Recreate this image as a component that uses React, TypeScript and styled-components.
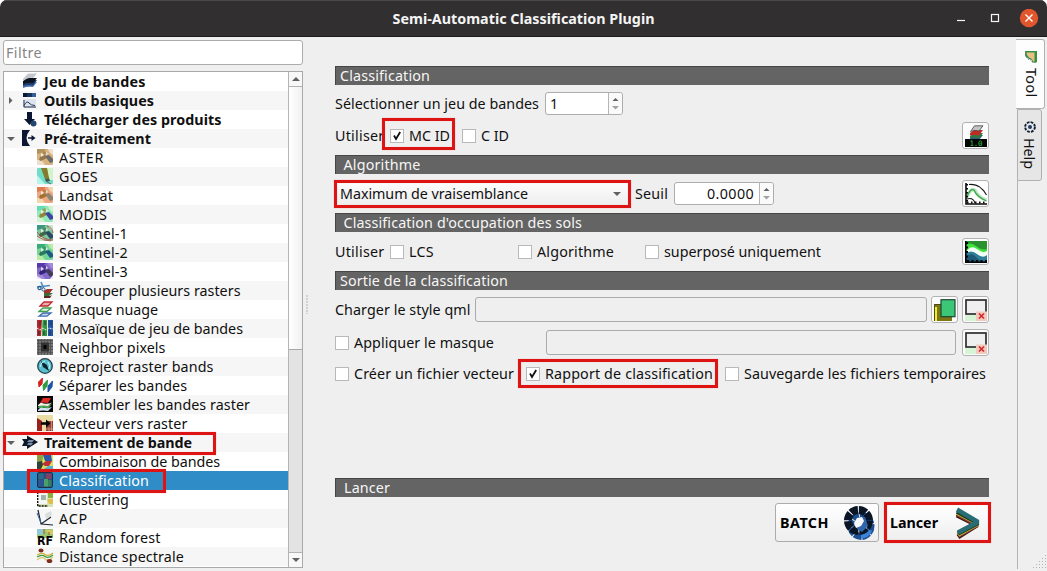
import React, { useLayoutEffect, useRef } from 'react';
import styled, { createGlobalStyle, css } from 'styled-components';

const Global = createGlobalStyle`
  * { box-sizing: border-box; }
  html, body { margin: 0; padding: 0; overflow: hidden; background: #fff; }
  body { font-family: "Noto Sans", "Open Sans", sans-serif; font-size: 14.3px; color: #111; }
`;

/* ---------- text that keeps the advance width of the desktop font ---------- */
const TextSpan = styled.span<{ $bold?: boolean; $vertical?: boolean }>`
  display: block;
  flex: none;
  width: ${(p) => (p.$vertical ? 'auto' : 'fit-content')};
  white-space: pre;
  line-height: 19px;
  font-weight: ${(p) => (p.$bold ? 700 : 400)};
  ${(p) => p.$vertical && css`writing-mode: vertical-rl;`}
`;

type TextProps = { w: number; bold?: boolean; vertical?: boolean; children: string };
function Text({ w, bold, vertical, children }: TextProps) {
  const ref = useRef<HTMLSpanElement>(null);
  useLayoutEffect(() => {
    const el = ref.current!;
    const fit = () => {
      el.style.letterSpacing = '0px';
      const r = el.getBoundingClientRect();
      const natural = vertical ? r.height : r.width;
      el.style.letterSpacing = `${(w - natural) / children.length}px`;
    };
    fit();
    document.fonts.ready.then(fit);
  }, [w, vertical, children]);
  return <TextSpan ref={ref} $bold={bold} $vertical={vertical}>{children}</TextSpan>;
}

/* ---------- window ---------- */
const Window = styled.div`
  width: 1047px; height: 571px;
  display: flex; flex-direction: column;
  background: #efefef;
  border-radius: 7px 7px 0 0;
  overflow: hidden;
`;
const TitleBar = styled.header`
  flex: none; height: 37px;
  display: grid; grid-template-columns: 1fr auto 1fr; align-items: center;
  background: #322f30;
  border-top: 1px solid #4a4848; border-bottom: 1px solid #1d1b1c;
  color: #f4f4f4;
`;
const WindowButtons = styled.div`
  display: flex; justify-content: flex-end; align-items: center; padding-right: 8px;
`;
const Body = styled.div`flex: 1; display: flex; min-height: 0;`;

/* ---------- sidebar ---------- */
const Sidebar = styled.aside`
  width: 300px; margin-left: 3px; padding-top: 3px; flex: none;
`;
const Filter = styled.div`
  height: 25px; border: 1px solid #acacac; border-radius: 3px; background: #fff;
  padding: 2px 0 0 2px; color: #858585;
`;
const Tree = styled.div`
  margin-top: 6px; height: 497px; display: flex;
  border: 1px solid #a9a9a9; background: #fff;
`;
const Rows = styled.div`width: 284px; position: relative;`;
const Row = styled.div<{ $alt: boolean; $selected?: boolean }>`
  height: 19px; display: flex; align-items: center; position: relative;
  background: ${(p) => (p.$selected ? '#308cc6' : p.$alt ? '#f6f6f6' : '#fff')};
  color: ${(p) => (p.$selected ? '#fff' : '#101010')};
`;
const Twisty = styled.span`width: 14px; height: 19px; margin-right: 4px; display: flex; align-items: center; justify-content: center;`;
const IconSlot = styled.span<{ $child?: boolean }>`
  display: flex; width: 16px; height: 16px;
  margin: -1px 6px 0 ${(p) => (p.$child ? 15 : 0)}px;
`;
const ScrollBar = styled.div`
  width: 14px; border-left: 1px solid #b4b4b4; display: flex; flex-direction: column; background: #e3e3e3;
`;
const ScrollArrow = styled.div`height: 14px; background: #f8f8f8; display: flex; align-items: center; justify-content: center;`;
const ScrollHandle = styled.div`
  height: 264px; border-top: 1px solid #b4b4b4; border-bottom: 1px solid #a8a8a8;
  background: linear-gradient(90deg, #fff, #f1f1f1);
`;
const ScrollGroove = styled.div`flex: 1; border-bottom: 1px solid #b4b4b4;`;
const Mark = styled.div<{ $l: number; $t: number; $w: number; $h: number }>`
  position: absolute; z-index: 2; pointer-events: none;
  left: ${(p) => p.$l}px; top: ${(p) => p.$t}px; width: ${(p) => p.$w}px; height: ${(p) => p.$h}px;
  border: 3px solid #dc1414;
  box-shadow: 0 0 1px rgba(255, 90, 90, .5), inset 0 0 1px rgba(255, 90, 90, .5);
`;
const Splitter = styled.div`
  width: 6px; height: 19px; margin: 258px 0 0; flex: none;
  background: radial-gradient(circle at 1px 1px, #c2c2c2 .6px, transparent .9px) 3px 0 / 6px 3px repeat-y;
`;

/* ---------- main panel ---------- */
const Panel = styled.main`
  width: 654px; margin-left: 26px; padding-top: 29px; flex: none;
  display: flex; flex-direction: column;
`;
const Heading = styled.div<{ $indent: number }>`
  height: 19px; flex: none; padding: 0 0 2px ${(p) => p.$indent}px;
  display: flex; align-items: center;
  background: #646464; color: #f6f6f6; border: solid #454545; border-width: 1px 0 0 1px;
`;
const Line = styled.div<{ $h: number; $mt?: number }>`
  height: ${(p) => p.$h}px; margin-top: ${(p) => p.$mt ?? 0}px; flex: none;
  display: flex; align-items: center; position: relative;
`;
const Gap = styled.span<{ $w?: number }>`
  ${(p) => (p.$w === undefined ? 'flex: 1;' : `flex: none; width: ${p.$w}px;`)}
`;
const CheckBox = styled.span`
  width: 14px; height: 14px; flex: none; margin-right: 5px;
  border: 1px solid #b9b9b9; background: #fff; display: flex;
`;
const Spin = styled.div<{ $w: number }>`
  width: ${(p) => p.$w}px; height: 23px; flex: none; display: flex;
  border: 1px solid #adadad; border-radius: 3px; background: #fff;
`;
const SpinValue = styled.div<{ $end?: boolean }>`
  flex: 1; display: flex; align-items: center; padding: 0 5px 0 4px;
  justify-content: ${(p) => (p.$end ? 'flex-end' : 'flex-start')};
`;
const SpinButtons = styled.div`
  width: 14px; border-left: 1px solid #b5b5b5; background: #fafafa; border-radius: 0 3px 3px 0;
  display: flex; flex-direction: column; align-items: center; justify-content: center; gap: 5px;
`;
const Combo = styled.div`
  width: 294px; height: 26px; flex: none; display: flex; align-items: center;
  padding: 0 7px 0 4px; background: linear-gradient(#fdfdfd, #ededed); border: 1px solid #bbb;
`;
const Field = styled.div<{ $w: number }>`
  width: ${(p) => p.$w}px; height: 25px; flex: none; border: 1px solid #ababab; border-radius: 3px;
`;
const ToolButton = styled.button`
  width: 27px; height: 27px; flex: none; padding: 0; display: flex; align-items: center; justify-content: center;
  border: 1px solid #b2b2b2; border-radius: 3px; background: #fcfcfc;
`;
const PushButton = styled.button`
  width: 104px; height: 39px; flex: none; padding: 0 3px 0 4px;
  display: flex; align-items: center; justify-content: space-between;
  border: 1px solid #acacac; border-radius: 3px; background: linear-gradient(#fff, #eee);
  font: inherit; color: #000;
`;

/* ---------- right tabs ---------- */
const Tabs = styled.nav`
  margin-left: 27px; flex: 1; display: flex; flex-direction: column; position: relative;
  padding-top: 2px;
`;
const Tab = styled.div<{ $active?: boolean }>`
  display: flex; flex-direction: column; align-items: center; gap: 5px;
  border: 1px solid #b0b0b0; border-radius: 0 3px 3px 0; flex: none;
  ${(p) => p.$active
    ? css`width: 29px; height: 70px; background: #fdfdfd; border-left: 0; padding: 11px 0 0 2px;`
    : css`width: 25px; height: 72px; margin-left: 1px; background: #e6e6e6; padding-top: 11px;`}
`;
const TabRail = styled.div`flex: 1; margin: 0 0 2px 1px; border-left: 1px solid #b4b4b4; display: flex; align-items: flex-end; justify-content: flex-end;`;

/* ---------- drawings ---------- */
const Tri = ({ dir, color = '#606060', s = 8 }: { dir: 'u' | 'd' | 'r'; color?: string; s?: number }) => (
  <svg width={dir === 'r' ? s / 2 : s} height={dir === 'r' ? s : s / 2} viewBox={dir === 'r' ? '0 0 4 8' : '0 0 8 4'} display="block">
    <path fill={color} d={dir === 'u' ? 'M0 4L4 0L8 4Z' : dir === 'd' ? 'M0 0H8L4 4Z' : 'M0 0L4 4L0 8Z'} />
  </svg>
);
const Tick = () => (
  <svg width="12" height="12" viewBox="0 0 12 12"><path d="M3 5.5L5 9L9.200 2" fill="none" stroke="#111" strokeWidth="1.800" /></svg>
);

const satellite = (a: string, b: string, c: string, body: string, wing: string) => (
  <>
    <rect width="16" height="16" rx="1" fill={a} />
    <path d="M0 0H9Q6 4 0 5Z" fill={b} opacity=".8" />
    <path d="M16 0V6Q12 4 11 0ZM0 11Q5 10 8 16H0Z" fill={c} opacity=".85" />
    <path d="M2 10L4 7L8 6L10 9L6 11L3 12Z" fill={wing} />
    <path d="M5 3L8 2L10 5L7 6Z" fill={wing} opacity=".7" />
    <path d="M8 7L12 6L16 10V13L13 14Z" fill={body} />
    <path d="M4 4L7 6L4 8ZM9 3L11 5L9 6Z" fill="#f4f4ee" opacity=".85" />
  </>
);

const icons: Record<string, React.ReactNode> = {
  bands: <>
    <path d="M1 12L4 9H15L11 14Q6 13 1 15Z" fill="#4a72b4" />
    <path d="M1 10L4 7H15L11 12.500Q6 11.500 1 13Z" fill="#213c68" />
    <path d="M1 8L5 5H15L11 10Q6 9 1 11Z" fill="#0b1420" />
    <path d="M1 6L6 .5H15L11 5Q7 4 1 8Z" fill="#c4c7cb" />
  </>,
  basic: <>
    <rect x="1" y="1" width="13" height="4" fill="#17335f" /><rect x="1" y="1" width="4" height="4" fill="#0b1a33" /><rect x="10" y="1" width="4" height="4" fill="#35609c" />
    <rect x="1" y="7" width="13" height="9" fill="#dde4ee" />
    <path d="M2 8V15H14M2 13.500Q5 8 7 11Q9 13.500 13 13.500" fill="none" stroke="#20324f" />
  </>,
  download: <><path d="M5 1H10V8H13L7.500 14L2 8H5Z" fill="#0b1730" /><circle cx="11.500" cy="12.500" r="3" fill="#24476f" /></>,
  pre: <><path d="M0 0H8Q1 8 8 16H0Z" fill="#0b1730" /><path d="M6 8H11" stroke="#0b1730" strokeWidth="1.600" /><path d="M9.500 5L13.500 8L9.500 11Z" fill="#0b1730" /></>,
  aster: satellite('#d8b380', '#a98a54', '#f1e6da', '#6d6b68', '#94774c'),
  goes: <>
    <rect width="16" height="16" rx="1" fill="#6fdcc8" /><path d="M10 0H16V12H12Z" fill="#d3f3c8" /><path d="M0 7L8 16H0Z" fill="#b6f5ea" />
    <path d="M4 0H10L12 10L8 11Z" fill="#857b28" /><path d="M8 11L12 10L13 13L9 14Z" fill="#465552" /><path d="M10 14L14 16" stroke="#666" />
  </>,
  landsat: satellite('#eda883', '#dd6f42', '#f2dfb4', '#8d8472', '#a4702f'),
  modis: satellite('#92e8b6', '#58d9b6', '#d9f5d2', '#3e44a2', '#93863c'),
  s1: <>{satellite('#7ec8a0', '#2a8c78', '#d2ead2', '#2c4a64', '#3e6a48')}<path d="M0 7Q6 15 16 15M0 11Q6 16 14 16M10 1Q16 3 16 8" fill="none" stroke="#b4433c" strokeWidth=".8" /></>,
  s2: satellite('#74d59a', '#28a36c', '#c6f0a4', '#1c5a82', '#2c7a5c'),
  s3: <>{satellite('#8468cc', '#4c2ba2', '#a990d8', '#443a5c', '#35227e')}<path d="M0 13L5 16H0ZM13 16L16 12V16Z" fill="#ece4fa" /></>,
  cut: <>
    <path d="M7 9L10 7H16L12 12H7Z" fill="#a1332b" /><path d="M7 12L8 11H16L12 14H7Z" fill="#3f6b3b" /><path d="M7 14H13L15 13L13 16H7Z" fill="#592720" />
    <path d="M4 0L6.500 6M0 5L13 3.500" stroke="#4f8fc0" strokeWidth="1.600" /><circle cx="6.500" cy="7.500" r="1.600" fill="none" stroke="#245b90" /><circle cx="2.500" cy="6" r="1.600" fill="none" stroke="#245b90" strokeWidth="1.200" />
  </>,
  cloud: <g fill="#fff" strokeWidth="1.300">
    <path d="M2 15.200L6 12H14L10 15.200Z" stroke="#3f6cb0" fill="#c8d6ec" /><path d="M2 10.500L6 7H14L10 10.500Z" stroke="#3fa04d" fill="#e7f4e8" /><path d="M3 5L7 1H15L11 5Z" stroke="#c22a32" fill="#e6b0b0" />
  </g>,
  mosaic: <><rect width="16" height="16" fill="#f0e8e4" /><path d="M0 0H5L4 16H0Z" fill="#b3262b" /><path d="M5.500 0H10V16H5Z" fill="#2f9a3f" /><path d="M11 0H16V16H11Z" fill="#2253a3" /><path d="M0 8L3 10L6 8L9 10L12 8L16 9" stroke="#e8f4e8" fill="none" strokeDasharray="2 1" /><path d="M3 1V6M2 11V15M14 1V5M13 11V15M8 1V5M7 11V15" stroke="#29303a" /></>,
  neighbor: <><rect width="16" height="16" fill="#777" /><path d="M0 1.500H16M0 4.500H16M0 7.500H16M0 10.500H16M0 13.500H16M1.500 0V16M4.500 0V16M7.500 0V16M10.500 0V16M13.500 0V16" stroke="#555" /><rect x="4" y="3.500" width="8" height="9" fill="#333" /><rect x="6.500" y="6" width="3" height="4" fill="#050505" /></>,
  reproject: <><circle cx="8" cy="8" r="7.300" fill="#58bfd0" stroke="#25404c" strokeWidth="1.300" /><path d="M4 3L10 7L12 13L6 9Z" fill="#0d2430" /><path d="M3 9Q4 4 8 3M11 4Q14 8 12 11" stroke="#c8f4fa" fill="none" /></>,
  split: <><path d="M5.500 1L5 7L2 10L1.500 5Z" fill="#d3221f" stroke="#d3221f" /><path d="M10.500 3L10 9L6.500 13.500L6 8Z" fill="#2e9b41" stroke="#2e9b41" /><path d="M15.500 4L15 10L11 15L11 9Z" fill="#1f56a6" stroke="#1f56a6" /></>,
  stack: <><rect width="16" height="16" fill="#070707" /><path d="M1 14L4 11Q9 13 15 11L11 15Q6 14 1 15Z" fill="#cfe3f5" /><path d="M1 11L4 8Q9 11 15 8L11 12.500Q6 11 1 12Z" fill="#49a654" /><path d="M1 9L4 6.500Q9 9 15 6.500L11 10Q6 9 1 10Z" fill="#f5f0e2" /><path d="M3 7L6 2H14L11 7Q7 6 3 7Z" fill="#de2b27" /></>,
  vector: <><rect width="16" height="16" fill="#e9dca5" /><path d="M0 3L5 6V16H0Z" fill="#9c1f20" /><rect x="9" y="6" width="7" height="10" fill="#9a4037" /><path d="M4 8.500H10" stroke="#050505" strokeWidth="2.600" /><path d="M9 4.500L13.500 8.500L9 12.500Z" fill="#050505" /><path d="M9 14H16M12 12V16M14.500 6V16" stroke="#e1b9a2" strokeWidth=".6" /></>,
  process: <><path d="M0 5H5V1.500L16 8L5 15V12H0L2 8Z" fill="#0b1626" /><path d="M5 8L7 6H12L10 8.500ZM5 10.500L6 9H11L9 11.500Z" fill="#7b8fa9" /></>,
  combine: <><rect width="16" height="16" fill="#d8e05a" /><path d="M0 0H7L5 9H0Z" fill="#8ba346" /><path d="M6 2H14L15 8L8 8Z" fill="#2a58ad" /><path d="M5 11L9 8H15L12 13L8 13Z" fill="#be2f37" /><path d="M0 9L5 8L6 12L4 16H0Z" fill="#32413a" /><path d="M11 13H16V16H7Z" fill="#56b1d0" /></>,
  classify: <><rect x=".5" y=".5" width="15" height="15" rx="1.500" fill="#2b4e83" stroke="#173049" /><rect x="1.500" y="1.500" width="5" height="5.500" fill="#2d6a87" /><rect x="9" y="1.500" width="5.500" height="5.500" fill="#843f63" /><rect x="1.500" y="8" width="5" height="6.500" fill="#2c5596" /><rect x="7" y="7" width="4" height="7.500" fill="#4aa069" /><rect x="11" y="8" width="3.500" height="6.500" fill="#35815f" /></>,
  cluster: <><rect width="16" height="16" fill="#d7e2b9" /><rect width="10" height="13" fill="#f5f5f2" /><path d="M.7 1V15H11" stroke="#111" strokeWidth="1.400" strokeDasharray="2 1" fill="none" /><rect x="4" y="4" width="5" height="5" fill="#9db5ac" /><path d="M11 0H16V7H11Z" fill="#8cae3b" /><path d="M10 8H16V13H12Z" fill="#e0be4a" /></>,
  acp: <><path d="M1 0L4 14L16 15M4 14L14 7" stroke="#1d2733" strokeWidth="1.200" fill="none" /><path d="M0 3L4 13" stroke="#3567a8" fill="none" /><path d="M8 4L14 1L15 5L9 9Z" fill="#d7dedc" /></>,
  forest: <><rect width="16" height="9" fill="#9bc56f" /><path d="M0 0H8L5 6H0Z" fill="#8fc9d3" /><path d="M8 1H16V5H12Z" fill="#d3ca69" /><path d="M7 0V5M12 3V6" stroke="#a65a25" /><text x="0" y="15.500" fontSize="11.500" fontWeight="700" textLength="16" lengthAdjust="spacingAndGlyphs" fontFamily="DejaVu Sans" fill="#050505">RF</text></>,
  distance: <><path d="M0 7Q5 4 8 6.500T16 5" stroke="#d0b23d" strokeWidth="1.400" fill="none" /><path d="M0 9Q5 6 8 8.500T16 7" stroke="#3a9b48" strokeWidth="1.300" fill="none" /><path d="M0 12Q5 8 8 11T16 9" stroke="#d9c873" strokeWidth="1.200" fill="none" /><ellipse cx="4" cy="2.600" rx="2.500" ry="2" fill="#7c2d20" /><ellipse cx="12.500" cy="13" rx="2.800" ry="2" fill="#7c2d20" /></>,
};
const TreeIcon = ({ name }: { name: string }) => <svg width="16" height="16" viewBox="0 0 16 16" overflow="visible">{icons[name]}</svg>;

const LayerIcon = () => (
  <svg width="22" height="22" viewBox="0 0 22 22" overflow="visible">
    <path d="M5 13L9 10H18L14 15H5Z" fill="#24618a" /><path d="M5 11L9 8H18L14 13.500Q9 12 5 13Z" fill="#35793e" />
    <path d="M5 8L9 5H18L14 10.500Q9 9 5 10.500Z" fill="#bd2c25" /><path d="M5.500 6.500L9.500 .8H18L14 6Q9 4.500 5.500 6.500Z" fill="#c4c4c4" stroke="#444" strokeWidth=".8" />
    <rect y="14" width="22" height="8" fill="#050505" />
    <text x="4.500" y="20.700" fontSize="7.500" fontFamily="DejaVu Sans Mono" fill="#2ec840" textLength="13">1.0</text>
  </svg>
);
const ThresholdIcon = () => (
  <svg width="22" height="22" viewBox="0 0 22 22" fill="none">
    <rect width="22" height="22" fill="#fff" /><path d="M2 14Q6 4 10 7.500Q14 15 21.500 17" stroke="#b8eac0" strokeWidth="3.500" /><path d="M2 14Q5 5 9 7Q12 14 21.500 18" stroke="#3f9d49" strokeWidth="1.300" />
    <path d="M1 0V21H22" stroke="#080808" strokeWidth="1.600" /><path d="M2 1V20" stroke="#080808" strokeWidth="2" strokeDasharray="1.500 2.500" /><path d="M2 19.500H22" stroke="#080808" strokeWidth="2" strokeDasharray="1.500 2.500" />
    <path d="M4 1.500Q15 0 21.500 12M2 16Q8 14 10 20" stroke="#151515" strokeWidth="1.100" />
  </svg>
);
const SignatureIcon = () => (
  <svg width="22" height="22" viewBox="0 0 22 22">
    <rect width="22" height="22" fill="#2b9130" /><path d="M0 5Q5 0 11 5T22 8V22H0Z" fill="#42e23e" /><path d="M0 12Q6 3 12 8T22 10V22H0Z" fill="#f2fff7" />
    <path d="M0 13Q6 8 12 13T22 14V22H0Z" fill="#2d7e98" /><path d="M0 17Q6 10 11 16T22 19V22H0Z" fill="#1e5874" />
    <path d="M.8 0V21.200H22" fill="none" stroke="#050505" strokeWidth="1.600" /><path d="M2 1V20M2 20H22" fill="none" stroke="#050505" strokeWidth="2" strokeDasharray="2 2.500" />
  </svg>
);
const StyleIcon = () => (
  <svg width="22" height="22" viewBox="0 0 22 22">
    <rect y="5" width="18" height="17" fill="#7c7615" /><path d="M0 8H3V22H0Z" fill="#f0ee30" /><path d="M.5 22V5.500H7" fill="none" stroke="#4e4b12" />
    <rect x="7" y=".7" width="14" height="17" fill="#3cc777" stroke="#1c4934" strokeWidth="1.200" />
  </svg>
);
const ClearIcon = () => (
  <svg width="22" height="22" viewBox="0 0 22 22">
    <rect width="22" height="22" fill="#fafafa" /><rect y="16" width="12" height="6" fill="#d7f4d6" /><rect x="1" y="1" width="20" height="14" fill="#efefef" stroke="#2e2e2e" strokeWidth="1.700" />
    <rect x="11" y="12.500" width="11" height="9.500" fill="#f2c9bd" /><path d="M14 14.500L19 19.500M19 14.500L14 19.500" stroke="#d12a2a" strokeWidth="1.700" />
  </svg>
);
const BatchIcon = () => (
  <svg width="32" height="34" viewBox="0 0 32 34" fill="none">
    <ellipse cx="18" cy="20" rx="10" ry="10.500" stroke="#1d4f92" strokeWidth="7" strokeDasharray="7 .8" />
    <path d="M18 30Q24 30 27 24" stroke="#3a83d6" strokeWidth="5" />
    <circle cx="15.500" cy="14.500" r="10.500" stroke="#0a1626" strokeWidth="8" strokeDasharray="7.300 .95" />
    <path d="M16 11H22L25 20L19 26L14 23V16Z" fill="#2f65ad" /><path d="M14 12L19 11L21 15L18 20L13 22L11 17Z" fill="#f6f8fb" />
  </svg>
);
const RunIcon = () => (
  <svg width="30" height="34" viewBox="0 0 30 34" fill="none" strokeLinejoin="bevel">
    <path d="M2 9L22 19L3 31" stroke="#2c1512" strokeWidth="5" /><path d="M2 7.500L22 18.500L3 29.500" stroke="#87352c" strokeWidth="5" />
    <path d="M2 6.500L23 17.500L3 28.500" stroke="#d2bd42" strokeWidth="4.500" /><path d="M2 5.500L23 17L3 27.500" stroke="#173d20" strokeWidth="4.500" />
    <path d="M2 3.500L23 16L3 26.500" stroke="#286d76" strokeWidth="4.500" />
  </svg>
);
const ToolIcon = () => (
  <svg width="12" height="12" viewBox="0 0 12 12"><path d="M0 0H12V11L10 12L7 11V9L4 8L0 5Z" fill="#38913f" /><path d="M1.500 1.500H9.500V10.500L8 10.500L7 8L4 6.500L2 4Z" fill="#e6c183" /><path d="M.5 1V5L3 8L6 9L8 12" stroke="#6a7c8b" fill="none" strokeDasharray="1.500 1" /></svg>
);
const HelpIcon = () => (
  <svg width="12" height="12" viewBox="0 0 12 12"><circle cx="6" cy="6" r="4.900" fill="none" stroke="#101d33" strokeWidth="1.900" strokeDasharray="2.700 1.150" /><circle cx="6" cy="6" r="2" fill="#1e3b66" /></svg>
);
const Grip = () => (
  <svg width="14" height="14" viewBox="0 0 14 14" fill="#b4b4b4">
    {[0, 1, 2, 3, 4].flatMap((r) => Array.from({ length: r + 1 }, (_, i) => <rect key={`${r}${i}`} x={12 - i * 3} y={r * 3} width="1" height="1" />))}
  </svg>
);

/* ---------- data ---------- */
type Node = { t: string; w: number; i: string; top?: boolean; open?: 'r' | 'd'; sel?: boolean };
const nodes: Node[] = [
  { t: 'Jeu de bandes', w: 101.5, i: 'bands', top: true },
  { t: 'Outils basiques', w: 110, i: 'basic', top: true, open: 'r' },
  { t: 'Télécharger des produits', w: 177.5, i: 'download', top: true },
  { t: 'Pré-traitement', w: 107, i: 'pre', top: true, open: 'd' },
  { t: 'ASTER', w: 45, i: 'aster' }, { t: 'GOES', w: 39, i: 'goes' }, { t: 'Landsat', w: 54, i: 'landsat' },
  { t: 'MODIS', w: 48, i: 'modis' }, { t: 'Sentinel-1', w: 69, i: 's1' }, { t: 'Sentinel-2', w: 69, i: 's2' },
  { t: 'Sentinel-3', w: 69, i: 's3' }, { t: 'Découper plusieurs rasters', w: 181.5, i: 'cut' },
  { t: 'Masque nuage', w: 99, i: 'cloud' }, { t: 'Mosaïque de jeu de bandes', w: 184, i: 'mosaic' },
  { t: 'Neighbor pixels', w: 106.5, i: 'neighbor' }, { t: 'Reproject raster bands', w: 154.5, i: 'reproject' },
  { t: 'Séparer les bandes', w: 128, i: 'split' }, { t: 'Assembler les bandes raster', w: 191, i: 'stack' },
  { t: 'Vecteur vers raster', w: 128.5, i: 'vector' },
  { t: 'Traitement de bande', w: 148, i: 'process', top: true, open: 'd' },
  { t: 'Combinaison de bandes', w: 161, i: 'combine' }, { t: 'Classification', w: 90, i: 'classify', sel: true },
  { t: 'Clustering', w: 70, i: 'cluster' }, { t: 'ACP', w: 29, i: 'acp' },
  { t: 'Random forest', w: 101.5, i: 'forest' }, { t: 'Distance spectrale', w: 125, i: 'distance' },
];

const Check = ({ on, label, w }: { on?: boolean; label: string; w: number }) => (
  <><CheckBox>{on && <Tick />}</CheckBox><Text w={w}>{label}</Text></>
);
const SpinBox = ({ w, vw, value, end }: { w: number; vw: number; value: string; end?: boolean }) => (
  <Spin $w={w}>
    <SpinValue $end={end}><Text w={vw}>{value}</Text></SpinValue>
    <SpinButtons><Tri dir="u" s={7} /><Tri dir="d" s={7} color="#a2a2a2" /></SpinButtons>
  </Spin>
);

export default function App() {
  return (
    <Window>
      <Global />
      <TitleBar>
        <span />
        <Text w={262} bold>Semi-Automatic Classification Plugin</Text>
        <WindowButtons>
          <svg width="82" height="20" viewBox="0 0 82 20" fill="none">
            <path d="M0 11.500H8" stroke="#f5f5f5" strokeWidth="1.200" /><rect x="34.500" y="5.500" width="7" height="7" stroke="#f5f5f5" strokeWidth="1.200" />
            <circle cx="72" cy="9" r="9.200" fill="#e1562c" /><path d="M68.500 5.500L75.500 12.500M75.500 5.500L68.500 12.500" stroke="#fff" strokeWidth="1.400" />
          </svg>
        </WindowButtons>
      </TitleBar>
      <Body>
        <Sidebar>
          <Filter><Text w={36}>Filtre</Text></Filter>
          <Tree>
            <Rows>
              {nodes.map((n, k) => (
                <Row key={n.t} $alt={k % 2 === 1} $selected={n.sel}>
                  <Twisty>{n.open && <Tri dir={n.open} s={n.open === 'r' ? 7 : 8} />}</Twisty>
                  <IconSlot $child={!n.top}><TreeIcon name={n.i} /></IconSlot>
                  <Text w={n.w} bold={n.top}>{n.t}</Text>
                  {n.i === 'process' && <Mark $l={-1} $t={-1} $w={213} $h={23} />}
                  {n.sel && <Mark $l={23} $t={-2} $w={139} $h={24} />}
                </Row>
              ))}
            </Rows>
            <ScrollBar>
              <ScrollArrow><Tri dir="u" /></ScrollArrow>
              <ScrollHandle />
              <ScrollGroove />
              <ScrollArrow><Tri dir="d" /></ScrollArrow>
            </ScrollBar>
          </Tree>
        </Sidebar>
        <Splitter />
        <Panel>
          <Heading $indent={4}><Text w={90}>Classification</Text></Heading>
          <Line $h={23} $mt={7}>
            <Text w={204}>Sélectionner un jeu de bandes</Text><Gap $w={6} />
            <SpinBox w={78} vw={8} value="1" />
          </Line>
          <Line $h={27} $mt={7}>
            <Text w={49.5}>Utiliser</Text><Gap $w={5.5} />
            <Check on label="MC ID" w={41} /><Gap $w={12} />
            <Check label="C ID" w={28} /><Gap />
            <ToolButton><LayerIcon /></ToolButton>
            <Mark $l={46.5} $t={-4} $w={73} $h={32} />
          </Line>
          <Line $h={6} />
          <Heading $indent={7.5}><Text w={77}>Algorithme</Text></Heading>
          <Line $h={27} $mt={6}>
            <Combo><Text w={188}>Maximum de vraisemblance</Text><Gap /><Tri dir="d" /></Combo>
            <Gap $w={6} /><Text w={33}>Seuil</Text><Gap $w={6} />
            <SpinBox w={100} vw={47} value="0.0000" end /><Gap />
            <ToolButton><ThresholdIcon /></ToolButton>
            <Mark $l={-1} $t={0} $w={297} $h={28} />
          </Line>
          <Line $h={6} />
          <Heading $indent={7.5}><Text w={238.5}>Classification d'occupation des sols</Text></Heading>
          <Line $h={27} $mt={6}>
            <Text w={49.5}>Utiliser</Text><Gap $w={5.5} />
            <Check label="LCS" w={25} /><Gap $w={84} />
            <Check label="Algorithme" w={77} /><Gap $w={31} />
            <Check label="superposé uniquement" w={157} /><Gap />
            <ToolButton><SignatureIcon /></ToolButton>
          </Line>
          <Line $h={6} />
          <Heading $indent={4}><Text w={168}>Sortie de la classification</Text></Heading>
          <Line $h={27} $mt={6}>
            <Text w={135.5}>Charger le style qml</Text><Gap $w={4.5} />
            <Field $w={452} /><Gap />
            <ToolButton><StyleIcon /></ToolButton><Gap $w={4} /><ToolButton><ClearIcon /></ToolButton>
          </Line>
          <Line $h={27} $mt={6}>
            <Check label="Appliquer le masque" w={140} /><Gap $w={52} />
            <Field $w={410} /><Gap /><ToolButton><ClearIcon /></ToolButton>
          </Line>
          <Line $h={19} $mt={8}>
            <Check label="Créer un fichier vecteur" w={160} /><Gap $w={12} />
            <Check on label="Rapport de classification" w={168} /><Gap $w={12} />
            <Check label="Sauvegarde les fichiers temporaires" w={242} />
            <Mark $l={183} $t={-5} $w={200} $h={29} />
          </Line>
          <Line $h={95} />
          <Heading $indent={8}><Text w={46}>Lancer</Text></Heading>
          <Line $h={39} $mt={6}>
            <Gap />
            <PushButton><Text w={49} bold>BATCH</Text><BatchIcon /></PushButton><Gap $w={6} />
            <PushButton><Text w={48} bold>Lancer</Text><RunIcon /></PushButton>
            <Mark $l={549} $t={-1} $w={107} $h={41} />
          </Line>
        </Panel>
        <Tabs>
          <Tab $active><ToolIcon /><Text w={29.5} vertical>Tool</Text></Tab>
          <Tab><HelpIcon /><Text w={31} vertical>Help</Text></Tab>
          <TabRail><Grip /></TabRail>
        </Tabs>
      </Body>
    </Window>
  );
}
